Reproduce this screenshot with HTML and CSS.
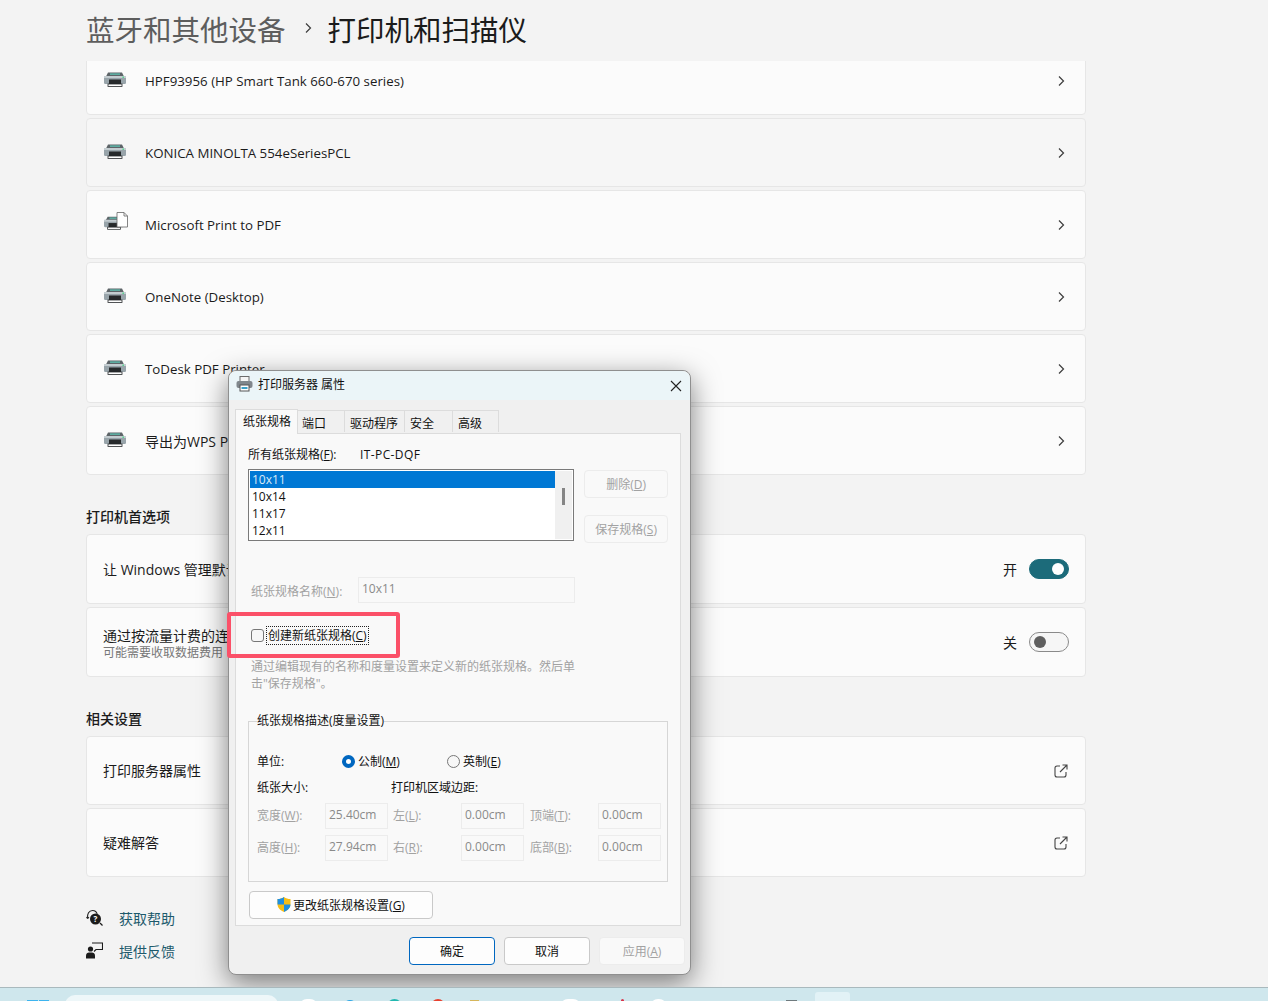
FILE: index.html
```html
<!DOCTYPE html>
<html lang="zh-CN">
<head>
    <meta charset="UTF-8">
    <title>打印机和扫描仪</title>
    <link rel="stylesheet" href="styles.css">
</head>
<body>
    <!-- shared icons -->
    <svg class="sprite" width="0" height="0">
        <symbol id="printer" viewBox="0 0 22 16">
            <path d="M4 0.5h14l2 4H2z" fill="#5d6468"/>
            <rect x="6" y="1.5" width="10" height="1.2" fill="#5fc9b8"/>
            <rect x="0" y="4" width="22" height="8" rx="1.2" fill="#98a4aa"/>
            <rect x="0" y="4" width="22" height="2" fill="#c3ccd0"/>
            <rect x="18.5" y="4.6" width="1.4" height="1.2" fill="#2ed573"/>
            <rect x="5" y="7.5" width="12" height="5" fill="#26292b"/>
            <rect x="4" y="12" width="14" height="2.4" fill="#fff" stroke="#26292b" stroke-width="0.8"/>
        </symbol>
        <symbol id="chevron" viewBox="0 0 10 12">
            <path d="M3 1.5l4.500 4.500-4.500 4.500" fill="none" stroke="#3c3c3c" stroke-width="1.200"/>
        </symbol>
        <symbol id="external" viewBox="0 0 14 14">
            <path d="M6 2H3a2 2 0 0 0-2 2v7a2 2 0 0 0 2 2h7a2 2 0 0 0 2-2V8" fill="none" stroke="#444" stroke-width="1.100"/>
            <path d="M6 8l7-7M8.500 1H13v4.500" fill="none" stroke="#444" stroke-width="1.100"/>
        </symbol>
    </svg>

    <main class="settings">
        <header class="crumbs">
            <span class="crumb-parent">蓝牙和其他设备</span>
            <svg class="crumb-arrow" width="10" height="12"><use href="#chevron"/></svg>
            <span class="crumb-current">打印机和扫描仪</span>
        </header>

        <div class="printer-list">
            <div class="card card-cut">
                <svg class="device-icon" width="22" height="16"><use href="#printer"/></svg>
                <span class="card-text card-latin">HPF93956 (HP Smart Tank 660-670 series)</span>
                <svg class="card-arrow" width="10" height="12"><use href="#chevron"/></svg>
            </div>
            <div class="card card-hover">
                <svg class="device-icon" width="22" height="16"><use href="#printer"/></svg>
                <span class="card-text card-latin">KONICA MINOLTA 554eSeriesPCL</span>
                <svg class="card-arrow" width="10" height="12"><use href="#chevron"/></svg>
            </div>
            <div class="card">
                <svg class="device-icon device-icon-doc" width="24" height="20" viewBox="0 0 24 20">
                    <use href="#printer" x="0" y="4" width="20" height="15"/>
                    <path d="M13 0.500h7l3.500 3.500v11H13z" fill="#fff" stroke="#666" stroke-width="0.800"/>
                    <path d="M20 0.500v3.500h3.500" fill="none" stroke="#666" stroke-width="0.800"/>
                </svg>
                <span class="card-text card-latin">Microsoft Print to PDF</span>
                <svg class="card-arrow" width="10" height="12"><use href="#chevron"/></svg>
            </div>
            <div class="card">
                <svg class="device-icon" width="22" height="16"><use href="#printer"/></svg>
                <span class="card-text card-latin">OneNote (Desktop)</span>
                <svg class="card-arrow" width="10" height="12"><use href="#chevron"/></svg>
            </div>
            <div class="card">
                <svg class="device-icon" width="22" height="16"><use href="#printer"/></svg>
                <span class="card-text card-latin">ToDesk PDF Printer</span>
                <svg class="card-arrow" width="10" height="12"><use href="#chevron"/></svg>
            </div>
            <div class="card">
                <svg class="device-icon" width="22" height="16"><use href="#printer"/></svg>
                <span class="card-text">导出为WPS PDF</span>
                <svg class="card-arrow" width="10" height="12"><use href="#chevron"/></svg>
            </div>
        </div>

        <h2 class="section-title">打印机首选项</h2>
        <div class="card card-plain">
            <span class="card-text">让 Windows 管理默认打印机</span>
            <span class="toggle-label">开</span>
            <span class="toggle toggle-on"></span>
        </div>
        <div class="card card-plain">
            <div class="card-stack">
                <span>通过按流量计费的连接下载驱动程序</span>
                <span class="card-sub">可能需要收取数据费用</span>
            </div>
            <span class="toggle-label">关</span>
            <span class="toggle"></span>
        </div>

        <h2 class="section-title">相关设置</h2>
        <div class="card card-link">
            <span class="card-text">打印服务器属性</span>
            <svg class="card-external" width="14" height="14"><use href="#external"/></svg>
        </div>
        <div class="card card-link">
            <span class="card-text">疑难解答</span>
            <svg class="card-external" width="14" height="14"><use href="#external"/></svg>
        </div>

        <div class="help-links">
            <a class="help-link">
                <svg width="17" height="17" viewBox="0 0 17 17">
                    <path d="M1.500 9.500C1 5 3 1.500 6.500 1.500c2.500 0 4.300 1.700 4.800 4M1.500 9.500L0.500 8M1.500 9.500L3 8.300" fill="none" stroke="#222" stroke-width="1.100"/>
                    <circle cx="9.500" cy="10" r="5.500" fill="#1b1b1b"/>
                    <path d="M14 14l2.500 2.500" stroke="#1b1b1b" stroke-width="1.200"/>
                    <text x="9.500" y="13" class="help-mark">?</text>
                </svg>
                <span>获取帮助</span>
            </a>
            <a class="help-link">
                <svg width="17" height="17" viewBox="0 0 17 17">
                    <circle cx="4.500" cy="7" r="2.600" fill="#1b1b1b"/>
                    <path d="M0 16.500v-3c0-2 1.500-3 3-3h3c1.500 0 3 1 3 3v3z" fill="#1b1b1b"/>
                    <path d="M6 1h10.500v6.500H10L8 9.500" fill="none" stroke="#1b1b1b" stroke-width="1.100"/>
                </svg>
                <span>提供反馈</span>
            </a>
        </div>
    </main>

    <footer class="taskbar">
        <span class="start-logo"><i></i><i></i></span>
        <span class="search-box"></span>
        <span class="tray-bit bit-white"></span>
        <span class="tray-bit bit-blue"></span>
        <span class="tray-bit bit-teal"></span>
        <span class="tray-bit bit-red"></span>
        <span class="tray-bit bit-gold"></span>
        <span class="tray-bit bit-wide"></span>
        <span class="tray-bit bit-pin"></span>
        <span class="tray-bit bit-round"></span>
        <span class="tray-bit bit-dark"></span>
        <span class="active-app"></span>
    </footer>

    <!-- print server properties dialog -->
    <section class="dialog">
        <div class="dialog-title">
            <svg width="17" height="16" viewBox="0 0 17 16">
                <rect x="4" y="0.500" width="9" height="5" fill="#f5f5f5" stroke="#6c6c6c"/>
                <rect x="0.500" y="5" width="16" height="7" rx="2" fill="#80878c"/>
                <rect x="4" y="9" width="9" height="6" fill="#fff" stroke="#555"/>
                <rect x="5.500" y="11" width="6" height="2" fill="#3aa0c8"/>
            </svg>
            <span class="dialog-name">打印服务器 属性</span>
            <svg class="dialog-close" width="12" height="12" viewBox="0 0 12 12">
                <path d="M1 1l10 10M11 1L1 11" stroke="#222" stroke-width="1.100"/>
            </svg>
        </div>

        <div class="tabs">
            <span class="tab tab-active">纸张规格</span>
            <span class="tab tab-ports">端口</span>
            <span class="tab tab-drivers">驱动程序</span>
            <span class="tab tab-security">安全</span>
            <span class="tab tab-advanced">高级</span>
        </div>

        <div class="panel">
            <div class="server-row">
                <span class="server-label">所有纸张规格(<u>F</u>):</span>
                <span class="server-name">IT-PC-DQF</span>
            </div>

            <div class="forms-row">
                <div class="listbox">
                    <ul class="listbox-items">
                        <li class="selected">10x11</li>
                        <li>10x14</li>
                        <li>11x17</li>
                        <li>12x11</li>
                    </ul>
                    <div class="listbox-scroll"><span class="listbox-thumb"></span></div>
                </div>
                <div class="side-buttons">
                    <button class="btn btn-off">删除(<u>D</u>)</button>
                    <button class="btn btn-off">保存规格(<u>S</u>)</button>
                </div>
            </div>

            <div class="name-row">
                <span class="name-label">纸张规格名称(<u>N</u>):</span>
                <span class="field field-name">10x11</span>
            </div>

            <div class="check-row">
                <span class="checkbox"></span>
                <span class="check-label">创建新纸张规格(<u>C</u>)</span>
            </div>

            <p class="hint">通过编辑现有的名称和度量设置来定义新的纸张规格。然后单击"保存规格"。</p>

            <fieldset class="measure">
                <legend>纸张规格描述(度量设置)</legend>
                <div class="unit-row">
                    <span class="unit-label">单位:</span>
                    <span class="radio-item radio-metric"><span class="radio radio-on"></span><span>公制(<u>M</u>)</span></span>
                    <span class="radio-item"><span class="radio"></span><span>英制(<u>E</u>)</span></span>
                </div>
                <div class="size-heads">
                    <span class="size-head">纸张大小:</span>
                    <span>打印机区域边距:</span>
                </div>
                <div class="size-grid">
                    <span class="size-label">宽度(<u>W</u>):</span>
                    <span class="field">25.40cm</span>
                    <span class="size-label label-left">左(<u>L</u>):</span>
                    <span class="field">0.00cm</span>
                    <span class="size-label label-top">顶端(<u>T</u>):</span>
                    <span class="field">0.00cm</span>
                    <span class="size-label">高度(<u>H</u>):</span>
                    <span class="field">27.94cm</span>
                    <span class="size-label label-left">右(<u>R</u>):</span>
                    <span class="field">0.00cm</span>
                    <span class="size-label label-top">底部(<u>B</u>):</span>
                    <span class="field">0.00cm</span>
                </div>
            </fieldset>

            <button class="btn btn-change">
                <svg width="14" height="15" viewBox="0 0 14 15">
                    <path d="M7 0C5 1.500 3 2 0.500 2v5c0 3.500 2.500 6.500 6.500 8 4-1.500 6.500-4.500 6.500-8V2C11 2 9 1.500 7 0z" fill="#f6bd16"/>
                    <path d="M7 0C5 1.500 3 2 0.500 2v5.500H7zM7 7.500V15c4-1.500 6.500-4.500 6.500-7.500z" fill="#1f8fe0"/>
                </svg>
                <span>更改纸张规格设置(<u>G</u>)</span>
            </button>
        </div>

        <div class="dialog-footer">
            <button class="btn btn-footer btn-default">确定</button>
            <button class="btn btn-footer">取消</button>
            <button class="btn btn-footer btn-off">应用(<u>A</u>)</button>
        </div>

        <!-- red marker drawn on the screenshot -->
        <div class="marker"></div>
    </section>
</body>
</html>
```

FILE: styles.css
```css
/* Page */
body {
    margin: 0;
    height: 1001px;
    overflow: hidden;
    position: relative;
    display: flex;
    flex-direction: column;
    background-color: #f3f3f3;
    color: #1b1b1b;
    font-family: "Open Sans", "Noto Sans CJK SC", sans-serif;
    font-size: 14px;
}

.sprite {
    position: absolute;
}

/* Settings window */
.settings {
    flex: 1;
    width: 1000px;
    margin-left: 86px;
}

.crumbs {
    box-sizing: border-box;
    height: 61px;
    padding-bottom: 5px;
    display: flex;
    align-items: center;
    font-size: 28.5px;
}

.crumb-parent {
    color: #5d5d5d;
}

.crumb-arrow {
    margin: 0 15px 0 17px;
}

.printer-list {
    height: 417px;
    overflow: hidden;
}

.card {
    box-sizing: border-box;
    height: 69px;
    margin-bottom: 3px;
    padding: 0 19px 0 17px;
    display: flex;
    align-items: center;
    background-color: #fbfbfb;
    border: 1px solid #e6e6e6;
    border-radius: 4px;
}

.card-cut {
    margin-top: -15px;
}

.card-hover {
    background-color: #f6f6f6;
}

.card-plain {
    height: 70px;
    padding-left: 16px;
}

.card-link {
    padding-left: 16px;
    padding-bottom: 2px;
}

.device-icon {
    margin-right: 19px;
    margin-top: -2px;
    flex-shrink: 0;
}

.device-icon-doc {
    margin-right: 17px;
    margin-top: -5px;
}

.card-text {
    flex: 1;
}

.card-latin {
    font-size: 13.3px;
}

.card-external {
    margin-right: -2px;
    margin-top: 2px;
}

.card-stack {
    flex: 1;
    padding-top: 3px;
    display: flex;
    flex-direction: column;
    line-height: 17px;
}

.card-sub {
    color: #777;
    font-size: 12px;
}

.section-title {
    height: 20px;
    margin: 0;
    padding: 29px 0 7px;
    font-size: 14px;
    font-weight: 500;
    line-height: 20px;
}

/* Toggles */
.toggle-label {
    margin-right: 12px;
}

.toggle {
    box-sizing: border-box;
    width: 40px;
    height: 20px;
    margin-right: -3px;
    padding: 3px 4px;
    display: flex;
    background-color: #f6f6f6;
    border: 1px solid #8a8a8a;
    border-radius: 10px;
}

.toggle::after {
    content: "";
    width: 12px;
    height: 12px;
    border-radius: 50%;
    background-color: #5f5f5f;
}

.toggle-on {
    justify-content: flex-end;
    background-color: #1c6b7a;
    border-color: #1c6b7a;
}

.toggle-on::after {
    background-color: #fff;
}

/* Help links */
.help-links {
    margin-top: 32px;
    display: flex;
    flex-direction: column;
    gap: 16px;
}

.help-link {
    height: 17px;
    display: flex;
    align-items: center;
    gap: 16px;
    color: #1d5a6c;
}

.help-mark {
    fill: #fff;
    font-size: 8px;
    font-weight: 700;
    text-anchor: middle;
}

/* Taskbar peeking in at the bottom */
.taskbar {
    position: relative;
    z-index: 2;
    box-sizing: border-box;
    height: 14px;
    display: flex;
    align-items: flex-start;
    background-color: #cfe7ed;
    border-top: 1px solid #a9b9bd;
    overflow: hidden;
}

.start-logo {
    width: 22px;
    margin: 12px 0 0 27px;
    display: flex;
    gap: 1px;
}

.start-logo i {
    flex: 1;
    height: 4px;
    background-color: #3db4ef;
}

.search-box {
    width: 213px;
    height: 20px;
    margin: 7px 0 0 16px;
    background-color: #eef7f9;
    border-radius: 10px;
}

.tray-bit {
    height: 10px;
    margin-top: 11px;
    border-radius: 8px 8px 0 0;
}

.bit-white {
    width: 19px;
    margin-left: 21px;
    background-color: #fff;
}

.bit-blue {
    width: 14px;
    margin: 12px 0 0 25px;
    background-color: #2ba5e6;
}

.bit-teal {
    width: 15px;
    margin-left: 30px;
    background-color: #22b8b0;
}

.bit-red {
    width: 14px;
    margin-left: 29px;
    background-color: #e8412f;
}

.bit-gold {
    width: 9px;
    margin: 12px 0 0 25px;
    background-color: #d6b65c;
    border-radius: 0;
}

.bit-wide {
    width: 21px;
    margin-left: 81px;
    background-color: #fff;
}

.bit-pin {
    width: 3px;
    margin-left: 40px;
    background-color: #d8334a;
}

.bit-round {
    width: 17px;
    margin-left: 26px;
    background-color: #fff;
}

.bit-dark {
    width: 11px;
    margin: 12px 0 0 119px;
    background-color: #6f7a7e;
    border-radius: 0;
}

.active-app {
    width: 35px;
    height: 12px;
    margin: 4px 0 0 18px;
    background-color: #e2f2f6;
    border-radius: 3px 3px 0 0;
}

/* Dialog */
.dialog {
    position: absolute;
    z-index: 1;
    left: 228px;
    top: 370px;
    box-sizing: border-box;
    width: 463px;
    height: 605px;
    padding: 0 9px 0 6px;
    background-color: #f0f0f0;
    border: 1px solid #8f8f8f;
    border-radius: 8px;
    box-shadow: 0 8px 28px rgba(0, 0, 0, 0.5);
    font-size: 12px;
    color: #111;
}

.dialog-title {
    box-sizing: border-box;
    height: 29px;
    margin: 0 -9px 0 -6px;
    padding: 0 8px 3px 7px;
    display: flex;
    align-items: center;
    gap: 5px;
    background-color: #ebf5f8;
    border-radius: 8px 8px 0 0;
}

.dialog-name {
    flex: 1;
}

.dialog-close {
    margin-top: 3px;
}

.tabs {
    height: 24px;
    margin-top: 9px;
    display: flex;
    align-items: flex-end;
}

.tab {
    box-sizing: border-box;
    height: 22px;
    margin-bottom: 1px;
    padding: 3px 0 0 4px;
    background-color: #f0f0f0;
    border: 1px solid #dcdcdc;
    border-bottom: 0;
}

.tab-active {
    width: 63px;
    height: 25px;
    margin-bottom: -1px;
    padding: 2px 0 0 7px;
    position: relative;
    background-color: #f9f9f9;
}

.tab-ports {
    width: 47px;
    border-left: 0;
}

.tab-drivers {
    width: 60px;
    border-left: 0;
    padding-left: 5px;
}

.tab-security {
    width: 48px;
    border-left: 0;
    padding-left: 5px;
}

.tab-advanced {
    width: 46px;
    border-left: 0;
    padding-left: 5px;
}

.panel {
    box-sizing: border-box;
    width: 446px;
    height: 493px;
    padding: 0 12px;
    background-color: #f9f9f9;
    border: 1px solid #dcdcdc;
}

.server-row {
    height: 20px;
    margin-top: 10px;
    display: flex;
    align-items: center;
}

.server-label {
    width: 112px;
}

.server-name {
    letter-spacing: 0.4px;
}

/* Forms list */
.forms-row {
    height: 74px;
    margin-top: 5px;
    display: flex;
    gap: 10px;
}

.listbox {
    box-sizing: border-box;
    width: 327px;
    height: 72px;
    padding: 1px;
    display: flex;
    background-color: #fff;
    border: 1px solid #7a7a7a;
}

.listbox-items {
    flex: 1;
    margin: 0;
    padding: 0;
    list-style: none;
    line-height: 17px;
}

.listbox-items li {
    padding-left: 2px;
}

.listbox-items .selected {
    background-color: #0078d4;
    color: #dcebf7;
}

.listbox-scroll {
    width: 17px;
    display: flex;
    justify-content: center;
    background-color: #f0f0f0;
}

.listbox-thumb {
    width: 3px;
    height: 17px;
    margin-top: 17px;
    background-color: #858585;
}

.side-buttons {
    width: 84px;
    margin-top: 1px;
    display: flex;
    flex-direction: column;
    gap: 17px;
}

/* Buttons */
.btn {
    box-sizing: border-box;
    height: 28px;
    padding: 0 0 1px;
    background-color: #fdfdfd;
    border: 1px solid #c9c9c9;
    border-radius: 4px;
    font-family: inherit;
    font-size: 12px;
    color: #111;
}

.btn-off {
    background-color: #f9f9f9;
    border-color: #ececec;
    color: #a2a2a2;
}

.btn-change {
    width: 184px;
    margin: 9px 0 0 1px;
    padding: 0 0 1px;
    display: flex;
    align-items: center;
    justify-content: center;
    gap: 2px;
}

.btn-footer {
    width: 86px;
}

.btn-default {
    border-color: #0067c0;
}

/* Form name and checkbox */
.name-row {
    height: 26px;
    margin-top: 34px;
    padding-left: 3px;
    display: flex;
    align-items: center;
    color: #a2a2a2;
}

.name-label {
    width: 107px;
    padding-top: 2px;
}

.field {
    box-sizing: border-box;
    height: 26px;
    padding: 2px 3px 0;
    background-color: #f9f9f9;
    border: 1px solid #ececec;
    color: #8a8a8a;
}

.field-name {
    width: 217px;
}

.check-row {
    height: 19px;
    margin-top: 23px;
    padding-left: 3px;
    display: flex;
    align-items: center;
    gap: 3px;
}

.checkbox {
    box-sizing: border-box;
    width: 13px;
    height: 13px;
    background-color: #f7f7f7;
    border: 1px solid #777;
    border-radius: 3px;
}

.check-label {
    padding: 0 1px;
    outline: 1px dotted #222;
    line-height: 17px;
}

.hint {
    width: 325px;
    margin: 13px 0 0;
    padding-left: 3px;
    color: #a2a2a2;
    line-height: 17px;
}

/* Measurements */
.measure {
    box-sizing: border-box;
    width: 420px;
    height: 170px;
    margin: 20px 0 0;
    padding: 0 6px 0 8px;
    border: 1px solid #d6d6d6;
}

.measure legend {
    padding: 0;
    line-height: 18px;
}

.unit-row {
    height: 18px;
    margin-top: 22px;
    display: flex;
    align-items: center;
}

.unit-label {
    width: 85px;
}

.radio-item {
    display: flex;
    align-items: center;
    gap: 3px;
}

.radio-metric {
    width: 105px;
}

.radio {
    box-sizing: border-box;
    width: 13px;
    height: 13px;
    background-color: #f7f7f7;
    border: 1px solid #777;
    border-radius: 50%;
}

.radio-on {
    background-color: #fff;
    border: 4px solid #0067c0;
}

.size-heads {
    height: 18px;
    margin-top: 8px;
    display: flex;
    align-items: center;
}

.size-head {
    width: 134px;
}

.size-grid {
    margin-top: 7px;
    display: grid;
    grid-template-columns: 68px 63px 73px 63px 74px 63px;
    grid-auto-rows: 26px;
    row-gap: 6px;
    color: #a2a2a2;
    align-items: center;
}

.size-label {
    padding-bottom: 2px;
}

.label-left {
    padding-left: 5px;
}

.label-top {
    padding-left: 6px;
}

/* Footer buttons */
.dialog-footer {
    margin: 11px -4px 0 0;
    display: flex;
    justify-content: flex-end;
    gap: 9px;
}

.marker {
    position: absolute;
    left: -2px;
    top: 241px;
    box-sizing: border-box;
    width: 173px;
    height: 46px;
    border: 4px solid #fb5068;
    border-radius: 3px;
}
```
